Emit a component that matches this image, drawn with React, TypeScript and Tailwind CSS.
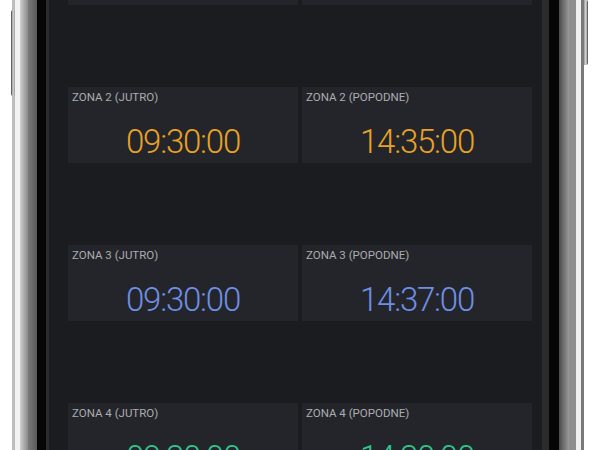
const zones = [
	{ zone: 1, left: "09:30:00", right: "14:30:00", color: "text-[#2fc48c]" },
	{ zone: 2, left: "09:30:00", right: "14:35:00", color: "text-[#e8a325]" },
	{ zone: 3, left: "09:30:00", right: "14:37:00", color: "text-[#6f8fe4]" },
	{ zone: 4, left: "09:30:00", right: "14:30:00", color: "text-[#2fc48c]" },
];

function TimeCard({ label, time, color }: { label: string; time: string; color: string }) {
	return (
		<div className="h-[76px] bg-[#23252a] flex flex-col">
			<div className="pt-[5px] pl-[4px] text-[11.5px] leading-none text-[#acadaf]">{label}</div>
			<div className={`mt-[21px] text-center text-[33px] font-light leading-none tracking-[-1.2px] ${color}`}>{time}</div>
		</div>
	);
}

export default function App() {
	return (
		<div className="w-[600px] h-[450px] overflow-hidden flex bg-white font-['Roboto',sans-serif]">
			{/* left frame */}
			<div className="relative w-[12px] shrink-0 bg-white">
				<div className="absolute left-[11px] top-[10px] w-[4px] h-[86px] rounded-l-[2px] bg-[linear-gradient(90deg,#3a3a3a,#d8d8d8,#9a9a9a)]" />
			</div>
			<div className="w-[3px] shrink-0 bg-[#bdbdbd]" />
			<div className="w-[5px] shrink-0 bg-[#f2f2f2]" />
			<div className="w-[8px] shrink-0 bg-[linear-gradient(90deg,#d0d0d0,#8a8a8a)]" />
			<div className="w-[9px] shrink-0 bg-[linear-gradient(90deg,#7a7a7a,#5a5a5a)]" />
			<div className="w-[9px] shrink-0 bg-[#060606]" />
			<div className="w-[3px] shrink-0 bg-[#2b2b2d]" />

			{/* screen */}
			<div className="w-[493px] shrink-0 bg-[#1b1c20] pl-[19px] pr-[10px]">
				<div className="-mt-[71px] grid grid-cols-2 gap-x-[4px] gap-y-[82px]">
					{zones.map(({ zone, left, right, color }) => [
						<TimeCard key={`${zone}-j`} label={`ZONA ${zone} (JUTRO)`} time={left} color={color} />,
						<TimeCard key={`${zone}-p`} label={`ZONA ${zone} (POPODNE)`} time={right} color={color} />,
					])}
				</div>
			</div>

			{/* right frame */}
			<div className="w-[7px] shrink-0 bg-[#2b2b2d]" />
			<div className="w-[10px] shrink-0 bg-[#060606]" />
			<div className="w-[10px] shrink-0 bg-[linear-gradient(90deg,#4a4a4a,#9a9a9a)]" />
			<div className="w-[7px] shrink-0 bg-[#8e8e8e]" />
			<div className="w-[5px] shrink-0 bg-[#f0f0f0]" />
			<div className="w-[3px] shrink-0 bg-[#7a7a7a]" />
			<div className="relative flex-1 bg-white">
				<div className="absolute left-0 top-0 w-[4px] h-[65px] rounded-r-[2px] bg-[linear-gradient(90deg,#9a9a9a,#e0e0e0,#3a3a3a)]" />
			</div>
		</div>
	);
}
